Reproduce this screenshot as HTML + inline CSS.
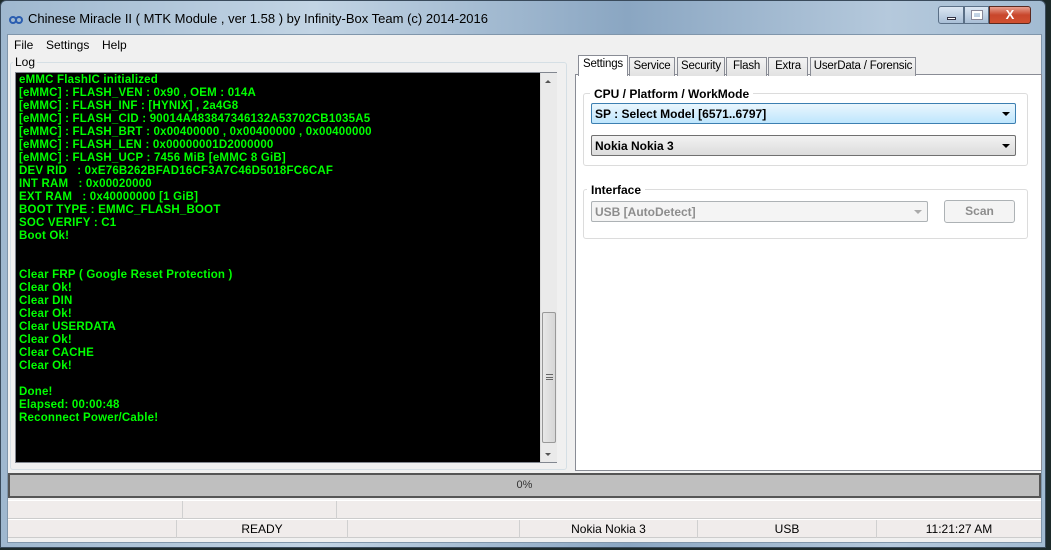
<!DOCTYPE html>
<html><head><meta charset="utf-8"><style>
*{margin:0;padding:0;box-sizing:border-box}
body{width:1051px;height:550px;overflow:hidden;background:#1d2a2a;font-family:"Liberation Sans",sans-serif;font-size:12px;position:relative}
.abs{position:absolute}
#frame{left:0;top:0;width:1046px;height:548px;border-radius:6px 6px 0 0;background:linear-gradient(90deg,#9fb8cf,#c2d4e4 30%,#8aa6c2 60%,#b5c9dc 85%,#a2bbd2);border:1px solid #3a4b5c}
#title{left:28px;top:11px;font-size:13px;color:#000}
#client{left:7px;top:34px;width:1035px;height:509px;background:#f0f0f0;border:1px solid #8096ab}
.menu{top:38px;font-size:12px}
#log{left:15px;top:72px;width:542px;height:391px;border:1px solid #828790;background:#000}
#logtxt{left:19px;top:74px;color:#00ff00;font-weight:bold;font-size:11.5px;line-height:13px;white-space:pre;letter-spacing:0.2px}
#sb{left:540px;top:73px;width:17px;height:389px;background:#eaeaea;border-left:1px solid #ddd}
#thumb{left:542px;top:312px;width:14px;height:131px;background:linear-gradient(90deg,#e8e8e8,#d6d6d6);border:1px solid #999;border-radius:2px}
#rp{left:575px;top:74px;width:467px;height:397px;background:#fff;border:1px solid #898c95}
.tab{top:57px;height:19px;border:1px solid #898c95;border-bottom:none;background:linear-gradient(#f3f3f3,#e2e2e2);font-size:11.5px;letter-spacing:-0.2px;white-space:nowrap;overflow:hidden;padding-top:2px;text-align:center;color:#000}
.grp{border:1px solid #dcdcdc;border-radius:3px}
.gl{background:#fff;font-weight:bold;font-size:12px;padding:0 4px}
.combo{border:1px solid #707070;border-radius:2px;font-weight:bold;font-size:12px;padding:3px 3px;height:21px}
.arr{position:absolute;right:5px;top:8px;width:0;height:0;border-left:4px solid transparent;border-right:4px solid transparent;border-top:4px solid #000}
#prog{left:8px;top:473px;width:1033px;height:25px;background:#bfbfbf;border:2px solid #555;text-align:center;font-size:11px;line-height:21px;color:#333}
.st{height:19px;border-top:1px solid #fff;border-bottom:1px solid #ccc;background:#f0eceb;font-size:12px}
.cell{position:absolute;top:0;height:18px;border-left:1px solid #d0d0d0;text-align:center;line-height:18px}
</style></head><body>
<div id="frame" class="abs"></div>
<svg class="abs" style="left:8px;top:13px" width="16" height="12"><path d="M2 7a3 3 0 1 0 6 0a3 3 0 1 0 6 0" fill="none" stroke="#2a5db0" stroke-width="2"/><path d="M2 7a3 3 0 1 1 6 0a3 3 0 1 1 6 0" fill="none" stroke="#2a5db0" stroke-width="2"/></svg>
<div id="title" class="abs">Chinese Miracle II ( MTK Module , ver 1.58 ) by Infinity-Box Team (c) 2014-2016</div>
<div class="abs" style="left:938px;top:6px;width:26px;height:18px;border:1px solid #5a6f86;border-radius:3px 0 0 3px;background:linear-gradient(#dbe6f2,#a8bed6)"><div class="abs" style="left:8px;top:10px;width:9px;height:3px;background:#fff;border:1px solid #334"></div></div>
<div class="abs" style="left:964px;top:6px;width:25px;height:18px;border:1px solid #5a6f86;background:linear-gradient(#dbe6f2,#a8bed6)"><div class="abs" style="left:7px;top:4px;width:10px;height:8px;border:2px solid #fff;outline:1px solid #889"></div></div>
<div class="abs" style="left:989px;top:6px;width:42px;height:18px;border:1px solid #5a2a20;border-radius:0 3px 3px 0;background:linear-gradient(#e8a090,#c8462c 50%,#d05030);color:#fff;font-weight:bold;text-align:center;font-size:13px;line-height:16px">X</div>
<div id="client" class="abs"></div>
<div class="abs menu" style="left:14px">File</div>
<div class="abs menu" style="left:46px">Settings</div>
<div class="abs menu" style="left:102px">Help</div>
<div class="abs" style="left:10px;top:62px;width:557px;height:408px;border:1px solid #d5dfe5;border-radius:3px"></div>
<div class="abs" style="left:13px;top:55px;background:#f0f0f0;padding:0 2px;font-size:12px">Log</div>
<div id="log" class="abs"></div>
<div id="logtxt" class="abs">eMMC FlashIC initialized
[eMMC] : FLASH_VEN : 0x90 , OEM : 014A
[eMMC] : FLASH_INF : [HYNIX] , 2a4G8
[eMMC] : FLASH_CID : 90014A483847346132A53702CB1035A5
[eMMC] : FLASH_BRT : 0x00400000 , 0x00400000 , 0x00400000
[eMMC] : FLASH_LEN : 0x00000001D2000000
[eMMC] : FLASH_UCP : 7456 MiB [eMMC 8 GiB]
DEV RID   : 0xE76B262BFAD16CF3A7C46D5018FC6CAF
INT RAM   : 0x00020000
EXT RAM   : 0x40000000 [1 GiB]
BOOT TYPE : EMMC_FLASH_BOOT
SOC VERIFY : C1
Boot Ok!


Clear FRP ( Google Reset Protection )
Clear Ok!
Clear DIN
Clear Ok!
Clear USERDATA
Clear Ok!
Clear CACHE
Clear Ok!

Done!
Elapsed: 00:00:48
Reconnect Power/Cable!</div>
<div id="sb" class="abs"></div>
<div class="abs" style="left:545px;top:80px;border-left:3px solid transparent;border-right:3px solid transparent;border-bottom:3px solid #555"></div>
<div class="abs" style="left:545px;top:453px;border-left:3px solid transparent;border-right:3px solid transparent;border-top:3px solid #555"></div>
<div id="thumb" class="abs"><div class="abs" style="left:3px;top:61px;width:7px;height:6px;border-top:1px solid #666;border-bottom:1px solid #666"><div style="margin-top:2px;height:1px;background:#666"></div></div></div>
<div id="rp" class="abs"></div>
<div class="tab abs" style="left:578px;top:55px;width:50px;height:21px;background:#fff;z-index:2">Settings</div>
<div class="tab abs" style="left:629px;width:46px">Service</div>
<div class="tab abs" style="left:677px;width:48px">Security</div>
<div class="tab abs" style="left:726px;width:41px">Flash</div>
<div class="tab abs" style="left:768px;width:40px">Extra</div>
<div class="tab abs" style="left:810px;width:106px">UserData / Forensic</div>
<div class="grp abs" style="left:583px;top:93px;width:445px;height:73px"></div>
<div class="gl abs" style="left:590px;top:87px">CPU / Platform / WorkMode</div>
<div class="combo abs" style="left:591px;top:103px;width:425px;background:linear-gradient(#eaf6fd,#bee6fd);border-color:#3c7fb1">SP : Select Model [6571..6797]<div class="arr"></div></div>
<div class="combo abs" style="left:591px;top:135px;width:425px;background:linear-gradient(#f2f2f2,#dcdcdc)">Nokia Nokia 3<div class="arr"></div></div>
<div class="grp abs" style="left:583px;top:189px;width:445px;height:50px"></div>
<div class="gl abs" style="left:587px;top:183px">Interface</div>
<div class="combo abs" style="left:591px;top:201px;width:337px;background:#f4f4f4;border-color:#adb2b5;color:#8d8d8d">USB [AutoDetect]<div class="arr" style="border-top-color:#aaa"></div></div>
<div class="abs" style="left:944px;top:200px;width:71px;height:23px;border:1px solid #adb2b5;border-radius:3px;background:#f4f4f4;color:#8d8d8d;font-weight:bold;text-align:center;line-height:21px">Scan</div>
<div id="prog" class="abs">0%</div>
<div class="st abs" style="left:8px;top:500px;width:1033px"><div class="cell" style="left:174px;width:1px"></div><div class="cell" style="left:328px;width:1px"></div></div>
<div class="st abs" style="left:8px;top:519px;width:1033px">
<div class="cell" style="left:168px;width:171px">READY</div>
<div class="cell" style="left:339px;width:172px"></div>
<div class="cell" style="left:511px;width:178px">Nokia Nokia 3</div>
<div class="cell" style="left:689px;width:179px">USB</div>
<div class="cell" style="left:868px;width:165px">11:21:27 AM</div>
</div>
</body></html>
